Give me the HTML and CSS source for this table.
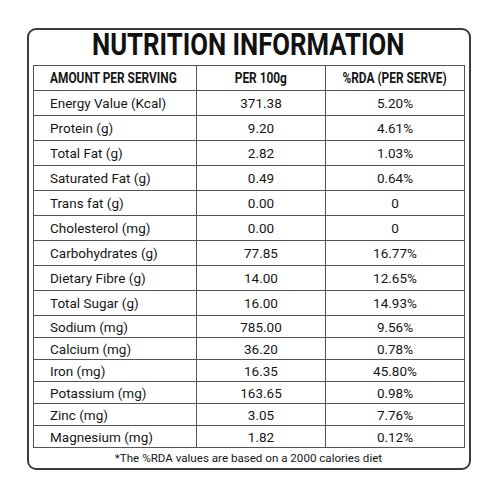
FILE: index.html
```html
<!DOCTYPE html>
<html lang="en">
<head>
  <meta charset="UTF-8">
  <title>Nutrition Information</title>
  <link rel="stylesheet" href="styles.css">
</head>
<body>

  <div class="card">
    <h1><span class="squeeze">NUTRITION INFORMATION</span></h1>

    <table class="facts">
      <colgroup>
        <col class="col-name">
        <col class="col-per">
        <col class="col-rda">
      </colgroup>
      <thead>
        <tr>
          <th class="name"><span class="squeeze left">AMOUNT PER SERVING</span></th>
          <th><span class="squeeze">PER 100g</span></th>
          <th><span class="squeeze">%RDA (PER SERVE)</span></th>
        </tr>
      </thead>
      <tbody>
        <tr><td class="name">Energy Value (Kcal)</td><td>371.38</td><td>5.20%</td></tr>
        <tr><td class="name">Protein (g)</td><td>9.20</td><td>4.61%</td></tr>
        <tr><td class="name">Total Fat (g)</td><td>2.82</td><td>1.03%</td></tr>
        <tr><td class="name">Saturated Fat (g)</td><td>0.49</td><td>0.64%</td></tr>
        <tr><td class="name">Trans fat (g)</td><td>0.00</td><td>0</td></tr>
        <tr><td class="name">Cholesterol (mg)</td><td>0.00</td><td>0</td></tr>
        <tr><td class="name">Carbohydrates (g)</td><td>77.85</td><td>16.77%</td></tr>
        <tr><td class="name">Dietary Fibre (g)</td><td>14.00</td><td>12.65%</td></tr>
        <tr><td class="name">Total Sugar (g)</td><td>16.00</td><td>14.93%</td></tr>
        <tr class="tight"><td class="name">Sodium (mg)</td><td>785.00</td><td>9.56%</td></tr>
        <tr class="tight"><td class="name">Calcium (mg)</td><td>36.20</td><td>0.78%</td></tr>
        <tr class="tight"><td class="name">Iron (mg)</td><td>16.35</td><td>45.80%</td></tr>
        <tr class="tight"><td class="name">Potassium (mg)</td><td>163.65</td><td>0.98%</td></tr>
        <tr class="tight"><td class="name">Zinc (mg)</td><td>3.05</td><td>7.76%</td></tr>
        <tr class="tight"><td class="name">Magnesium (mg)</td><td>1.82</td><td>0.12%</td></tr>
      </tbody>
    </table>

    <p class="note">*The %RDA values are based on a 2000 calories diet</p>
  </div>

</body>
</html>
```

FILE: styles.css
```css
* {
  box-sizing: border-box;
  margin: 0;
  padding: 0;
}

body {
  font-family: Roboto, "Liberation Sans", sans-serif;
  background-color: #fff;
  color: #161616;
}

.card {
  width: 444px;
  margin: 28px 0 0 27px;
  padding: 0 5px 0 4px;
  border: 2px solid #3c3c3c;
  border-radius: 9px;
}

/* no condensed face installed, so squeeze the bold headings */
.squeeze {
  display: inline-block;
  transform: scaleX(0.82);
  transform-origin: center;
}

.squeeze.left {
  transform-origin: left center;
}

h1 {
  font-weight: bold;
  font-size: 31px;
  line-height: 30px;
  text-align: center;
  margin-bottom: 5px;
  color: #111;
  white-space: nowrap;
}

h1 .squeeze {
  transform: scaleX(0.83);
}

.facts {
  width: 431px;
  border-collapse: collapse;
  table-layout: fixed;
}

.col-name { width: 163px; }
.col-per { width: 129px; }
.col-rda { width: 139px; }

.facts th,
.facts td {
  border: 1px solid #555;
  text-align: center;
  font-size: 13.5px;
  white-space: nowrap;
}

.facts tr { height: 25px; }
.facts tr.tight { height: 22px; }

.facts th {
  font-weight: bold;
  font-size: 14.5px;
}

.facts .name {
  text-align: left;
  padding-left: 16px;
}

.note {
  font-size: 11.6px;
  line-height: 20px;
  text-align: center;
}
```
